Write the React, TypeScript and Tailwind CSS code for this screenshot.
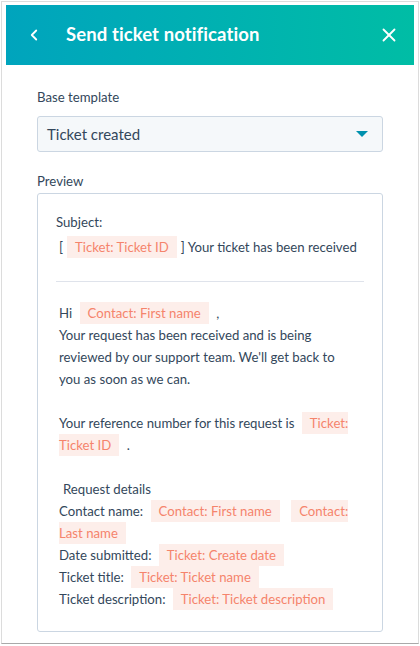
import { ChevronLeft, X } from "lucide-react";

function Token({ children }: { children: React.ReactNode }) {
  return (
    <span className="mx-1 bg-[#fdeeea] px-2 py-[3px] text-[#f5846c]">
      {children}
    </span>
  );
}

export default function App() {
  return (
    <div className="h-[646px] w-[420px] bg-white px-[1px] pb-[2px] pt-[1px] font-['Lato',sans-serif] text-[#33475b]">
      <div className="flex h-full flex-col border border-[#dcdcdc] border-b-[#a9a9a9] px-[4px] pt-[3px]">
        <header className="flex h-[60px] shrink-0 items-center bg-gradient-to-r from-[#00a4bd] to-[#00bda5] text-white">
          <ChevronLeft className="ml-[19px] h-[18px] w-[18px]" strokeWidth={2.4} />
          <h1 className="ml-[23px] text-[18.5px] font-bold tracking-[0.1px]">
            Send ticket notification
          </h1>
          <X className="ml-auto mr-[14px] h-[22px] w-[22px]" strokeWidth={2} />
        </header>

        <div className="px-[31px] pt-[22px] text-[13.2px] leading-[20px]">
          <label className="block">Base template</label>
          <div className="mt-[9px] flex h-[36px] items-center justify-between rounded-[3px] border border-[#cbd6e2] bg-[#f5f8fa] pl-[9px] pr-[14px]">
            <span className="text-[15px]">Ticket created</span>
            <span className="h-0 w-0 border-x-[6px] border-t-[6px] border-x-transparent border-t-[#0091ae]" />
          </div>

          <label className="mt-[19px] block">Preview</label>
          <div className="mt-[2px] h-[439px] rounded-[3px] border border-[#cbd6e2] px-[18px] pt-[17px] leading-[22px]">
            <div>Subject:</div>
            <div className="mt-[3px] pl-[3px]">
              [<Token>Ticket: Ticket ID</Token>] Your ticket has been received
            </div>
            <div className="mb-[20px] mt-[23px] border-t border-[#dfe3eb]" />
            <div className="pl-[3px]">
              <div>
                Hi <Token>Contact: First name</Token> ,
                <br />
                Your request has been received and is being
                <br />
                reviewed by our support team. We'll get back to
                <br />
                you as soon as we can.
              </div>
              <div className="mt-[22px]">
                Your reference number for this request is <Token>Ticket: Ticket ID</Token> .
              </div>
              <div className="mt-[22px]">
                <div className="pl-[4px]">Request details</div>
                <div>
                  Contact name: <Token>Contact: First name</Token> <Token>Contact: Last name</Token>
                </div>
                <div>
                  Date submitted: <Token>Ticket: Create date</Token>
                </div>
                <div>
                  Ticket title: <Token>Ticket: Ticket name</Token>
                </div>
                <div>
                  Ticket description: <Token>Ticket: Ticket description</Token>
                </div>
              </div>
            </div>
          </div>
        </div>
      </div>
    </div>
  );
}
